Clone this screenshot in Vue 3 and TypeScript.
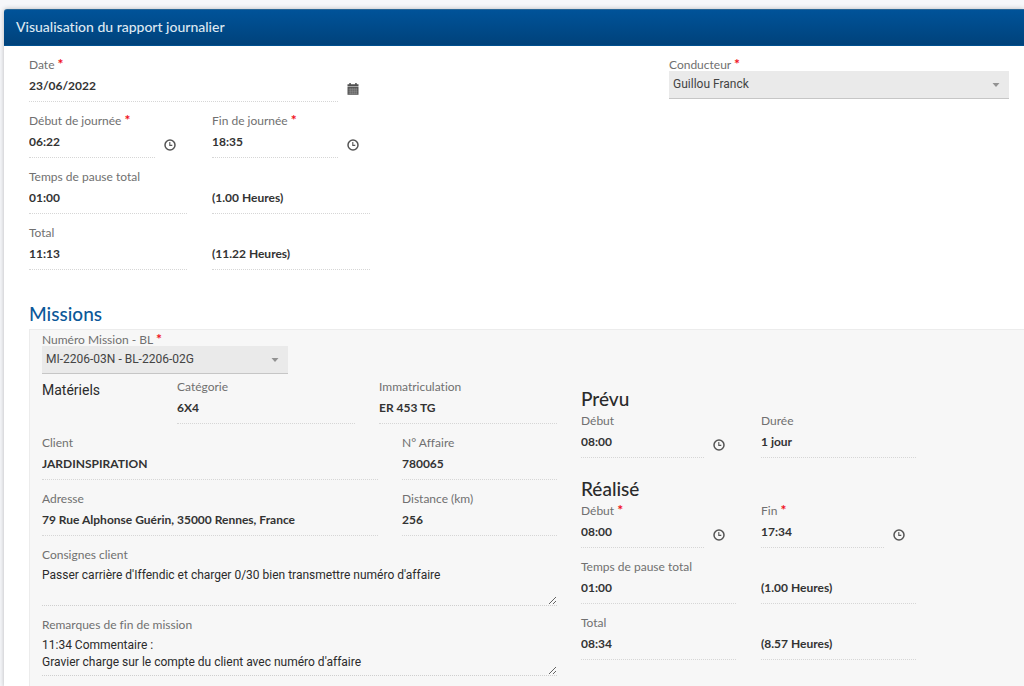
<script setup lang="ts">
import { ref } from 'vue'

interface Field {
  id: string
  label?: string
  hint?: string
  value: string
  required?: boolean
  icon?: 'calendar' | 'clock'
  wide?: boolean
}

interface FieldGroup {
  title: string
  fields: Field[]
}

const dayFields = ref<Field[]>([
  { id: 'date', label: 'Date', value: '23/06/2022', required: true, icon: 'calendar', wide: true },
  { id: 'day-start', label: 'Début de journée', value: '06:22', required: true, icon: 'clock' },
  { id: 'day-end', label: 'Fin de journée', value: '18:35', required: true, icon: 'clock' },
  { id: 'day-break', label: 'Temps de pause total', value: '01:00' },
  { id: 'day-break-hours', hint: 'Temps de pause total en heures', value: '(1.00 Heures)' },
  { id: 'day-total', label: 'Total', value: '11:13' },
  { id: 'day-total-hours', hint: 'Total en heures', value: '(11.22 Heures)' },
])

const equipment = ref<Field[]>([
  { id: 'category', label: 'Catégorie', value: '6X4' },
  { id: 'plate', label: 'Immatriculation', value: 'ER 453 TG' },
])

const customer = ref<Field[]>([
  { id: 'client', label: 'Client', value: 'JARDINSPIRATION' },
  { id: 'case', label: 'N° Affaire', value: '780065' },
  { id: 'address', label: 'Adresse', value: '79 Rue Alphonse Guérin, 35000 Rennes, France' },
  { id: 'distance', label: 'Distance (km)', value: '256' },
])

const notes = ref<Field[]>([
  {
    id: 'instructions',
    label: 'Consignes client',
    value: "Passer carrière d'Iffendic et charger 0/30 bien transmettre numéro d'affaire",
  },
  {
    id: 'remarks',
    label: 'Remarques de fin de mission',
    value: "11:34 Commentaire :\nGravier charge sur le compte du client avec numéro d'affaire",
  },
])

const schedule = ref<FieldGroup[]>([
  {
    title: 'Prévu',
    fields: [
      { id: 'planned-start', label: 'Début', value: '08:00', icon: 'clock' },
      { id: 'planned-length', label: 'Durée', value: '1 jour' },
    ],
  },
  {
    title: 'Réalisé',
    fields: [
      { id: 'actual-start', label: 'Début', value: '08:00', required: true, icon: 'clock' },
      { id: 'actual-end', label: 'Fin', value: '17:34', required: true, icon: 'clock' },
      { id: 'actual-break', label: 'Temps de pause total', value: '01:00' },
      { id: 'actual-break-hours', hint: 'Temps de pause total en heures', value: '(1.00 Heures)' },
      { id: 'actual-total', label: 'Total', value: '08:34' },
      { id: 'actual-total-hours', hint: 'Total en heures', value: '(8.57 Heures)' },
    ],
  },
])

const driver = ref('Guillou Franck')
const mission = ref('MI-2206-03N - BL-2206-02G')
</script>

<template>
  <main class="card">
    <header class="card-header">
      <h1>Visualisation du rapport journalier</h1>
    </header>

    <div class="card-body">
      <section class="day">
        <div class="pair">
          <div v-for="f in dayFields" :key="f.id" class="field" :class="{ wide: f.wide }">
            <label v-if="f.label" :for="f.id">{{ f.label }} <span v-if="f.required" class="req">*</span></label>
            <div class="control">
              <input :id="f.id" v-model="f.value" type="text" :aria-label="f.hint" />
              <button v-if="f.icon === 'calendar'" type="button" aria-label="Choisir la date">
                <svg width="12" height="12" viewBox="0 0 12 12">
                  <path d="M0.5 1.2h11v2.2h-11zM2.3 0h1.5v2h-1.5zM8.2 0h1.5v2h-1.5z" fill="#505050" />
                  <path d="M0.5 4h11v7.8h-11z" fill="#555" />
                  <path d="M1.5 6.2h9M1.5 8.2h9M1.5 10.2h9M3.2 4.8v6.4M5.2 4.8v6.4M7.2 4.8v6.4M9.2 4.8v6.4" stroke="#a5a5a5" stroke-width="0.5" />
                </svg>
              </button>
              <button v-else-if="f.icon" type="button" aria-label="Choisir l'heure">
                <svg width="12" height="12" viewBox="0 0 12 12" fill="none" stroke="#555">
                  <circle cx="6" cy="6" r="5" stroke-width="1.5" />
                  <path d="M5.8 3v3.4h2.5" stroke-width="1.1" />
                </svg>
              </button>
            </div>
          </div>
        </div>

        <div class="field driver">
          <label for="driver" class="tight">Conducteur <span class="req">*</span></label>
          <div class="select">
            <select id="driver" v-model="driver">
              <option>Guillou Franck</option>
            </select>
            <svg class="caret" width="8" height="4" viewBox="0 0 8 4"><path d="M0.5 0h7L4 4z" fill="#929292" /></svg>
          </div>
        </div>
      </section>

      <h2>Missions</h2>

      <section class="mission">
        <div class="field mission-number">
          <label for="mission" class="tight">Numéro Mission - BL <span class="req">*</span></label>
          <div class="select">
            <select id="mission" v-model="mission">
              <option>MI-2206-03N - BL-2206-02G</option>
            </select>
            <svg class="caret" width="8" height="4" viewBox="0 0 8 4"><path d="M0.5 0h7L4 4z" fill="#929292" /></svg>
          </div>
        </div>

        <div class="mission-grid">
          <div class="details">
            <div class="equipment">
              <h4>Matériels</h4>
              <div v-for="f in equipment" :key="f.id" class="field">
                <label :for="f.id">{{ f.label }}</label>
                <div class="control"><input :id="f.id" v-model="f.value" type="text" /></div>
              </div>
            </div>
            <div class="customer">
              <div v-for="f in customer" :key="f.id" class="field">
                <label :for="f.id">{{ f.label }}</label>
                <div class="control"><input :id="f.id" v-model="f.value" type="text" /></div>
              </div>
            </div>
            <div v-for="f in notes" :key="f.id" class="field">
              <label :for="f.id">{{ f.label }}</label>
              <textarea :id="f.id" v-model="f.value" rows="2"></textarea>
            </div>
          </div>

          <div class="schedule">
            <template v-for="g in schedule" :key="g.title">
              <h3>{{ g.title }}</h3>
              <div class="pair">
                <div v-for="f in g.fields" :key="f.id" class="field">
                  <label v-if="f.label" :for="f.id">{{ f.label }} <span v-if="f.required" class="req">*</span></label>
                  <div class="control">
                    <input :id="f.id" v-model="f.value" type="text" :aria-label="f.hint" />
                    <button v-if="f.icon" type="button" aria-label="Choisir l'heure">
                      <svg width="12" height="12" viewBox="0 0 12 12" fill="none" stroke="#555">
                        <circle cx="6" cy="6" r="5" stroke-width="1.5" />
                        <path d="M5.8 3v3.4h2.5" stroke-width="1.1" />
                      </svg>
                    </button>
                  </div>
                </div>
              </div>
            </template>
          </div>
        </div>
      </section>
    </div>
  </main>
</template>

<style>
body {
  margin: 0;
  background: #f6f7fa;
  overflow: hidden;
}
</style>

<style scoped>
.card {
  margin: 9px 0 0 4px;
  min-height: calc(100vh - 9px);
  background: #fff;
  border-radius: 3px 0 0 0;
  box-shadow: 0 0 5px rgba(0, 0, 0, 0.25);
  font-family: Lato, "Liberation Sans", sans-serif;
  font-size: 12px;
  font-variant-ligatures: none;
  color: #2b2b2b;
}

.card-header {
  box-sizing: border-box;
  height: 37px;
  padding: 0 12px 2px;
  display: flex;
  align-items: center;
  border-top: 1px solid #2a6797;
  border-bottom: 1px solid #00508f;
  border-radius: 3px 0 0 0;
  background: linear-gradient(#005399, #00427b);
}

h1,
h2,
h3,
h4 {
  margin: 0;
  font-weight: 500;
}

h1 {
  font-size: 14px;
  line-height: 20px;
  color: #dde8f2;
}

h2 {
  margin: 21px 0 3px;
  font-size: 19px;
  line-height: 24px;
  color: #0b5899;
}

h3 {
  margin: 8px 0 2px;
  font-size: 19px;
  line-height: 24px;
}

h4 {
  font-family: Roboto, sans-serif;
  font-size: 14px;
  font-weight: 400;
  line-height: 22px;
}

.card-body {
  padding: 11px 0 0 25px;
}

.day {
  display: grid;
  grid-template-columns: 341fr 299fr 340fr;
  align-items: start;
  margin-right: 15px;
}

.driver {
  grid-column: 3;
}

.pair {
  display: grid;
  grid-template-columns: 1fr 1fr;
  column-gap: 25px;
  align-items: end;
}

.wide {
  grid-column: 1 / -1;
}

.field {
  min-width: 0;
  margin-bottom: 11px;
}

label {
  display: block;
  height: 16px;
  line-height: 16px;
  color: #707070;
  white-space: nowrap;
}

label.tight {
  height: 14px;
}

.req {
  color: #f01020;
  font-size: 14px;
  font-weight: 700;
  line-height: 1;
}

.control {
  display: flex;
}

input {
  box-sizing: border-box;
  flex: 1;
  min-width: 0;
  height: 29px;
  margin: 0;
  padding: 0 0 4px;
  border: 0;
  border-bottom: 1px dotted #d6d6d6;
  border-radius: 0;
  background: transparent;
  font: 700 12px Lato, "Liberation Sans", sans-serif;
  color: #333;
  outline: none;
}

button {
  display: flex;
  align-items: center;
  justify-content: center;
  width: 32px;
  height: 29px;
  padding: 3px 2px 0 0;
  border: 0;
  background: transparent;
}

.select {
  position: relative;
}

select {
  box-sizing: border-box;
  display: block;
  width: 100%;
  height: 28px;
  padding: 0 24px 1px 4px;
  appearance: none;
  border: 0;
  border-bottom: 1px solid #c6c6c6;
  border-radius: 0;
  background: #eaeaea;
  font: 400 12px Roboto, sans-serif;
  color: #444;
  outline: none;
}

.caret {
  position: absolute;
  top: 12px;
  right: 9px;
  pointer-events: none;
}

.mission {
  padding: 2px 0 0 12px;
  border: 1px solid #ececec;
  border-right: 0;
  border-bottom: 0;
  background: #f7f7f7;
}

.mission-number {
  width: 25%;
  margin-bottom: 5px;
}

.mission-grid {
  display: grid;
  grid-template-columns: 515fr 335fr 84fr;
  column-gap: 24px;
  align-items: start;
}

.equipment {
  display: grid;
  grid-template-columns: 111fr 178fr 178fr;
  column-gap: 24px;
}

.customer {
  display: grid;
  grid-template-columns: 336fr 155fr;
  column-gap: 24px;
}

textarea {
  box-sizing: border-box;
  display: block;
  width: 100%;
  height: 43px;
  padding: 4px 0 0;
  border: 0;
  border-bottom: 1px dotted #cfcfcf;
  background: transparent;
  font: 400 12px/17px Roboto, sans-serif;
  color: #2b2b2b;
  overflow: hidden;
  outline: none;
  resize: vertical;
}
</style>
